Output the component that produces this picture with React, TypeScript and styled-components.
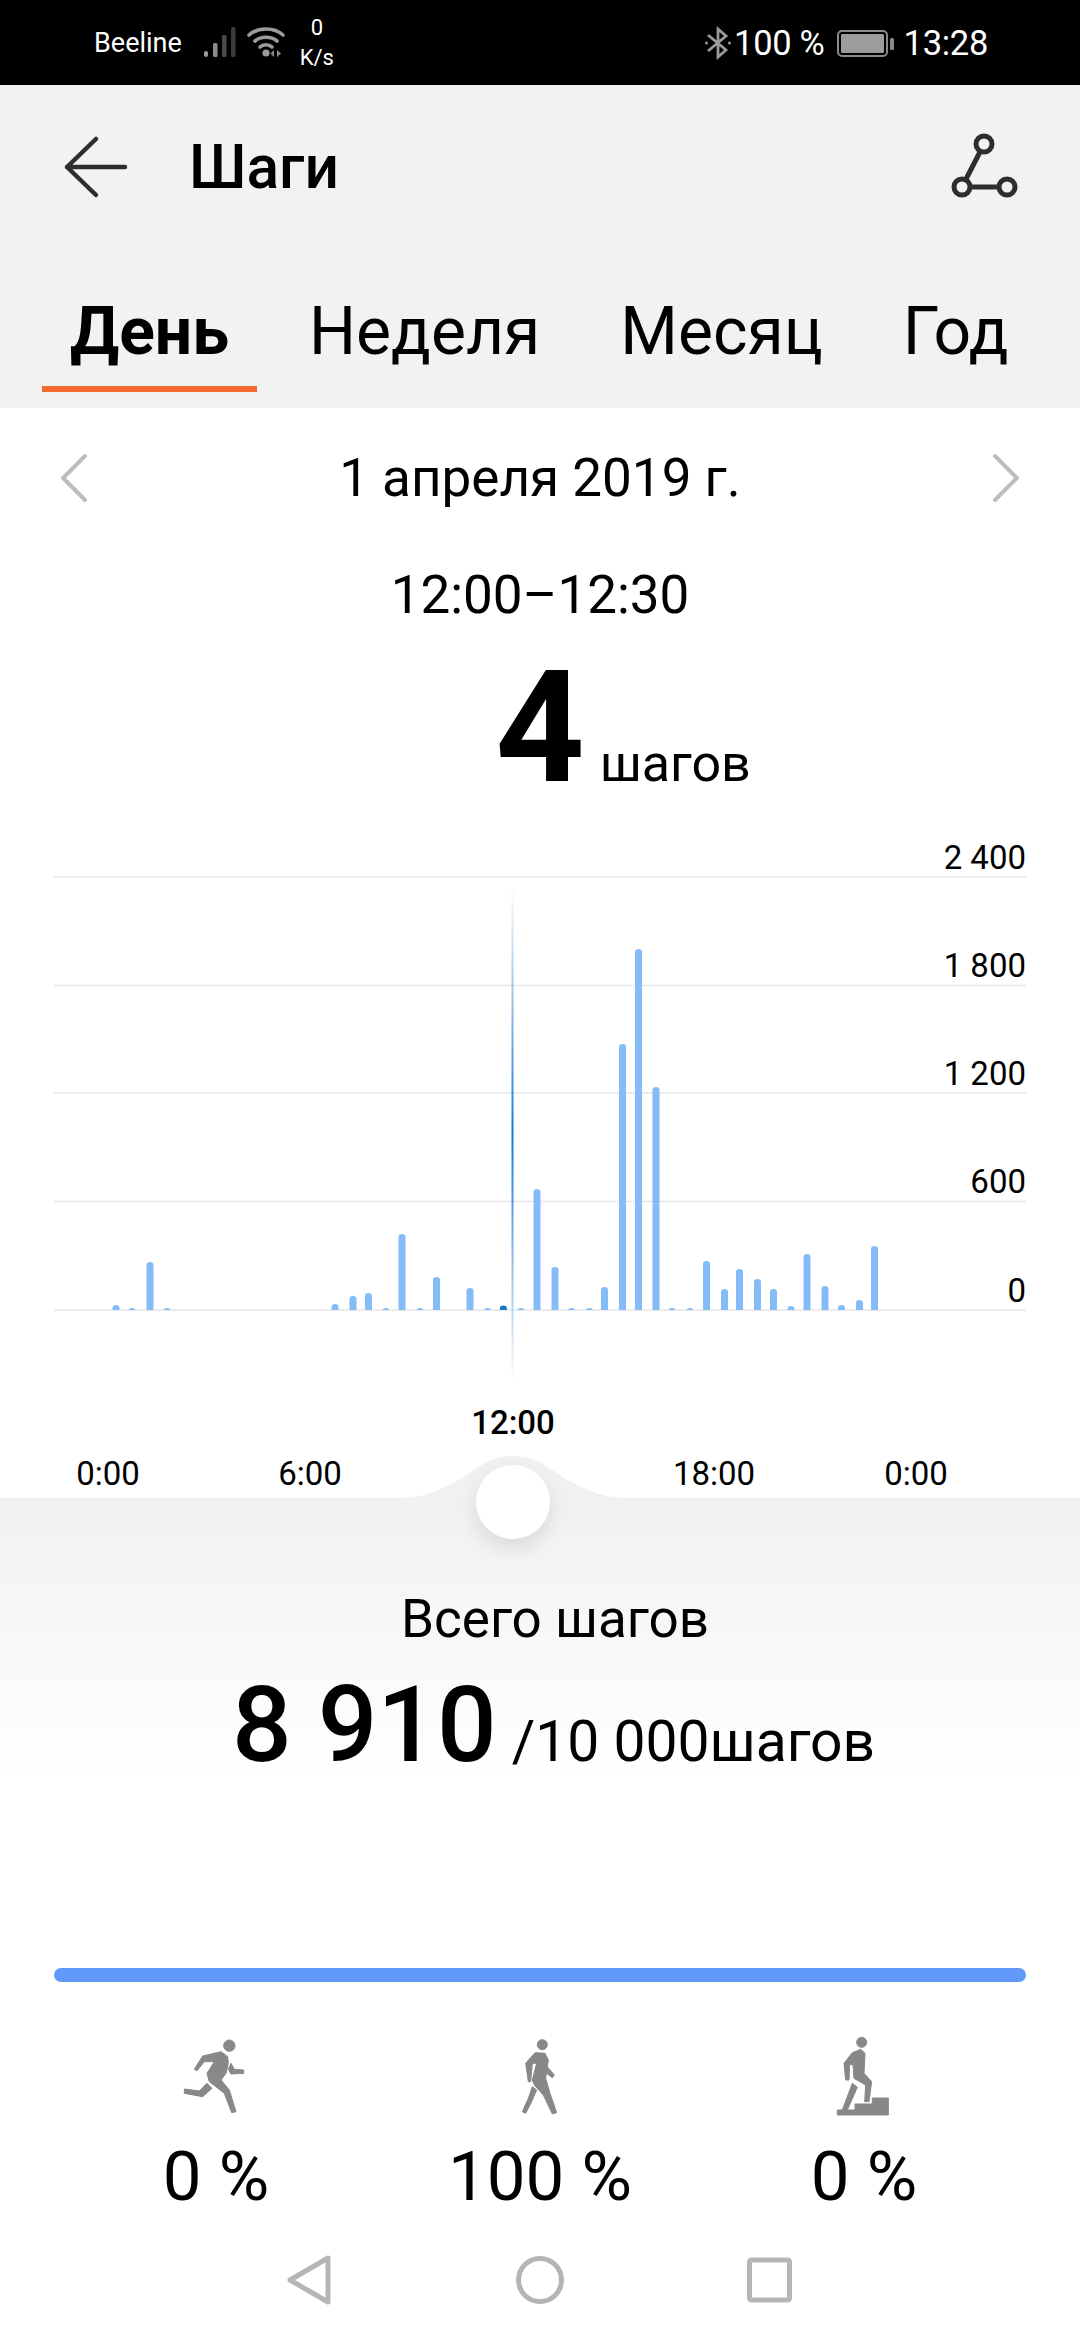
import React from "react";
import styled, { createGlobalStyle } from "styled-components";

const GlobalStyle = createGlobalStyle`
  html, body {
    margin: 0;
    padding: 0;
    background: #ffffff;
  }
  * {
    box-sizing: border-box;
  }
`;

const Page = styled.div`
  width: 1080px;
  height: 2340px;
  overflow: hidden;
  display: flex;
  flex-direction: column;
  background: #ffffff;
  color: #000000;
  font-family: Roboto, "Noto Sans", sans-serif;
`;

const StatusBar = styled.div`
  height: 85px;
  flex: none;
  background: #000000;
  color: #ffffff;
  display: flex;
  align-items: center;
  justify-content: space-between;
  padding: 0 92px 0 94px;
`;

const StatusGroup = styled.div`
  display: flex;
  align-items: center;
`;

const Carrier = styled.span`
  font-size: 27px;
  margin-right: 22px;
`;

const NetSpeed = styled.span`
  width: 48px;
  margin-left: 8px;
  display: flex;
  flex-direction: column;
  align-items: center;
  font-size: 22px;
  line-height: 30px;
`;

const StatusText = styled.span`
  font-size: 34.5px;
  letter-spacing: -0.3px;
`;

const TopPanel = styled.div`
  height: 323px;
  flex: none;
  background: #f2f2f2;
  display: flex;
  flex-direction: column;
`;

const TitleRow = styled.div`
  height: 170px;
  display: flex;
  align-items: center;
  padding: 0 59px 6px 62px;
`;

const Title = styled.h1`
  flex: 1;
  margin: 0 0 0 61px;
  font-size: 60.5px;
  font-weight: 500;
`;

const Tabs = styled.div`
  display: flex;
  gap: 24px;
  padding-left: 42px;
`;

const Tab = styled.div<{ $active?: boolean }>`
  height: 137px;
  padding: 38px 28px 0;
  font-size: 66px;
  line-height: 78px;
  font-weight: ${({ $active }) => ($active ? 700 : 400)};
  border-bottom: 6px solid ${({ $active }) => ($active ? "#f26b2d" : "transparent")};
`;

const DatePager = styled.div`
  height: 140px;
  flex: none;
  display: flex;
  align-items: center;
  justify-content: space-between;
  padding: 0 60px;
  font-size: 53px;
`;

const RangeLabel = styled.div`
  height: 94px;
  flex: none;
  display: flex;
  align-items: center;
  justify-content: center;
  font-size: 53px;
`;

const ValueRow = styled.div`
  height: 178px;
  flex: none;
  display: flex;
  align-items: baseline;
  justify-content: center;
  padding-left: 166px;
  gap: 15px;
`;

const BigValue = styled.span`
  font-size: 156px;
  line-height: 172px;
  font-weight: 700;
`;

const Unit = styled.span`
  font-size: 52px;
`;

const ChartBlock = styled.svg`
  display: block;
  flex: none;
  width: 1080px;
  height: 570px;
`;

const AxisLabel = styled.text`
  font-family: Roboto, sans-serif;
  font-size: 33px;
  fill: #000000;
`;

const TimeAxis = styled.div`
  position: relative;
  height: 108px;
  flex: none;
  display: grid;
  grid-template-columns: repeat(5, 202px);
  padding-left: 7px;
  padding-top: 67px;
  font-size: 33px;
  line-height: 34px;
  text-align: center;
`;

const AxisHump = styled.svg`
  position: absolute;
  left: 380px;
  bottom: 0;
`;

const CurrentTime = styled.span`
  position: absolute;
  left: 0;
  width: 1026px;
  top: 16px;
  font-weight: 500;
`;

const Knob = styled.div`
  position: absolute;
  left: 476px;
  top: 75px;
  width: 74px;
  height: 74px;
  border-radius: 50%;
  background: #ffffff;
  box-shadow: 0 10px 22px rgba(0, 0, 0, 0.1);
  z-index: 2;
`;

const Summary = styled.div`
  height: 470px;
  flex: none;
  padding-top: 91px;
  background: linear-gradient(#f1f1f1, #ffffff 280px);
  display: flex;
  flex-direction: column;
  align-items: center;
`;

const SummaryLabel = styled.div`
  padding-left: 30px;
  font-size: 53px;
  line-height: 60px;
`;

const SummaryValue = styled.div`
  margin-top: 18px;
  padding-left: 27px;
  display: flex;
  align-items: baseline;
  gap: 15px;
`;

const TotalSteps = styled.span`
  font-size: 105px;
  line-height: 118px;
  font-weight: 500;
`;

const Goal = styled.span`
  font-size: 57px;
`;

const ProgressTrack = styled.div`
  height: 14px;
  flex: none;
  margin: 0 54px;
  border-radius: 7px;
  background: #6199f8;
`;

const Modes = styled.div`
  flex: none;
  display: grid;
  grid-template-columns: repeat(3, 324px);
  padding: 48px 54px 0;
`;

const Mode = styled.div`
  display: flex;
  flex-direction: column;
  align-items: center;
`;

const ModeIcon = styled.svg`
  display: block;
  color: #888888;
`;

const ModeValue = styled.div`
  margin-top: 19px;
  font-size: 69px;
  line-height: 76px;
`;

const NavBar = styled.div`
  flex: 1;
  display: flex;
  align-items: flex-start;
  padding: 39px 0 0 286px;
  gap: 182px;
`;

const bars: [number, number][] = [
  [116, 1305], [132, 1308], [150, 1262], [167, 1308], [335, 1304], [353, 1296],
  [368.5, 1293], [386, 1308], [402, 1234], [420, 1308], [436.5, 1277], [470, 1288],
  [487.5, 1308], [521, 1308], [537, 1189], [555, 1267], [571.5, 1308], [589.5, 1308],
  [604.5, 1287], [622.5, 1044], [638.5, 949], [656, 1087], [672, 1308], [690, 1308],
  [706.5, 1261], [724.5, 1289], [739.5, 1269], [757.5, 1279], [773.5, 1289], [791, 1306],
  [807, 1254], [825, 1286], [841.5, 1305], [859.5, 1300], [874.5, 1246],
];

const gridRows = [
  { label: "2 400", y: 37 },
  { label: "1 800", y: 145.5 },
  { label: "1 200", y: 253 },
  { label: "600", y: 361.5 },
  { label: "0", y: 470 },
];

const modes = [
  {
    value: "0 %",
    icon: (
      <>
        <circle cx="175" cy="47" r="17" />
        <path d="M70 118 L95 78 L150 65 L170 80 L172 100 L165 130 L150 150 L175 180 L195 245 L182 248 L160 190 L115 155 L108 130 L130 95 L100 95 L78 122 Z" />
        <path d="M108 160 L123 175 L95 200 L40 190 L40 177 L85 183 Z" />
        <path d="M180 100 L190 118 L218 120 L218 130 L180 132 L172 118 Z" />
      </>
    ),
  },
  {
    value: "100 %",
    icon: (
      <>
        <circle cx="142" cy="44" r="15" />
        <path d="M100 155 L92 100 L120 68 L150 70 L160 90 L152 145 L165 190 L185 248 L172 252 L145 195 L118 165 L112 150 L125 100 L112 100 L107 155 Z" />
        <path d="M112 170 L125 180 L110 215 L92 250 L82 245 L100 205 Z" />
        <path d="M158 112 L178 135 L172 143 L155 130 Z" />
      </>
    ),
  },
  {
    value: "0 %",
    icon: (
      <>
        <circle cx="128" cy="37" r="15" />
        <path d="M80 150 L75 100 L100 68 L125 58 L138 70 L135 130 L158 155 L150 215 L137 215 L140 165 L105 145 L102 105 L92 102 L90 150 Z" />
        <path d="M100 160 L115 172 L85 240 L70 240 Z" />
        <path d="M55 255 V240 H108 V222 H160 V204 H208 V255 Z" />
      </>
    ),
  },
];

const App: React.FC = () => {
  return (
    <Page>
      <GlobalStyle />
      <StatusBar>
        <StatusGroup>
          <Carrier>Beeline</Carrier>
          <svg width="32" height="32" viewBox="0 0 32 32">
            <rect x="0" y="24" width="4" height="6" rx="2" fill="#9a9a9a" />
            <rect x="9" y="16" width="4.5" height="14" rx="1.5" fill="#8c8c8c" />
            <rect x="18" y="8" width="4.5" height="22" rx="1.5" fill="#4a4a4a" />
            <rect x="27" y="0" width="4.5" height="30" rx="1.5" fill="#3a3a3a" />
          </svg>
          <svg width="38" height="34" viewBox="0 0 38 34" style={{ marginLeft: 11 }}>
            <g fill="none" stroke="#9c9c9c" strokeWidth="3.6" strokeLinecap="round">
              <path d="M2 9 C11 1 27 1 36 9" />
              <path d="M8 15 C14 10 24 10 30 15" />
              <path d="M13 21 C16 18 22 18 25 21" />
            </g>
            <circle cx="19" cy="27" r="3.6" fill="#9c9c9c" />
            <path d="M27 24 V31 L23.5 27.5 Z M30 24 V31 L34 27.5 Z" fill="#8a8a8a" />
          </svg>
          <NetSpeed>
            <span>0</span>
            <span>K/s</span>
          </NetSpeed>
        </StatusGroup>
        <StatusGroup>
          <svg width="26" height="34" viewBox="0 0 26 34" style={{ marginRight: 3 }}>
            <path d="M3 9 L21 24 L13 31 V3 L21 10 L3 25" fill="none" stroke="#9a9a9a" strokeWidth="2.8" />
            <circle cx="1.5" cy="17" r="1.5" fill="#9a9a9a" />
            <circle cx="24.5" cy="17" r="1.5" fill="#9a9a9a" />
          </svg>
          <StatusText>100 %</StatusText>
          <svg width="58" height="28" viewBox="0 0 58 28" style={{ margin: "0 9px 0 12px" }}>
            <rect x="1" y="2" width="49" height="25" rx="4" fill="none" stroke="#8a8a8a" strokeWidth="2" />
            <rect x="4" y="5" width="43" height="19" rx="1.5" fill="#9c9c9c" />
            <rect x="53" y="9" width="4" height="12" rx="1.5" fill="#8a8a8a" />
          </svg>
          <StatusText>13:28</StatusText>
        </StatusGroup>
      </StatusBar>

      <TopPanel>
        <TitleRow>
          <svg width="66" height="64" viewBox="0 0 66 64">
            <path d="M34 4 L5 32 L34 60 M5 32 H63" fill="none" stroke="#2e2e2e" strokeWidth="4.5" strokeLinecap="round" strokeLinejoin="round" />
          </svg>
          <Title>Шаги</Title>
          <svg width="70" height="70" viewBox="0 0 70 70">
            <g fill="none" stroke="#2e2e2e" strokeWidth="5">
              <circle cx="33" cy="12" r="8" />
              <circle cx="11" cy="55" r="8" />
              <circle cx="56" cy="55" r="8" />
              <path d="M29.5 19 L14.5 48 M19 55 H48" />
            </g>
          </svg>
        </TitleRow>
        <Tabs>
          <Tab $active>День</Tab>
          <Tab>Неделя</Tab>
          <Tab>Месяц</Tab>
          <Tab>Год</Tab>
        </Tabs>
      </TopPanel>

      <DatePager>
        <svg width="28" height="48" viewBox="0 0 28 48">
          <path d="M25 2 L3 24 L25 46" fill="none" stroke="#bdbdbd" strokeWidth="4" strokeLinecap="round" strokeLinejoin="round" />
        </svg>
        <span>1 апреля 2019 г.</span>
        <svg width="28" height="48" viewBox="0 0 28 48">
          <path d="M3 2 L25 24 L3 46" fill="none" stroke="#bdbdbd" strokeWidth="4" strokeLinecap="round" strokeLinejoin="round" />
        </svg>
      </DatePager>
      <RangeLabel>12:00–12:30</RangeLabel>
      <ValueRow>
        <BigValue>4</BigValue>
        <Unit>шагов</Unit>
      </ValueRow>

      <ChartBlock viewBox="0 -20 1080 570">
        <defs>
          <linearGradient id="cursor" x1="0" y1="0" x2="0" y2="1">
            <stop offset="0" stopColor="#1577d2" stopOpacity="0" />
            <stop offset="0.5" stopColor="#1577d2" stopOpacity="1" />
            <stop offset="1" stopColor="#1577d2" stopOpacity="0" />
          </linearGradient>
        </defs>
        {gridRows.map((row) => (
          <g key={row.label}>
            <line x1="54" x2="1026" y1={row.y} y2={row.y} stroke="#e6e6e6" strokeWidth="1.5" />
            <AxisLabel x="1026" y={row.y - 8.5} textAnchor="end">
              {row.label}
            </AxisLabel>
          </g>
        ))}
        {bars.map(([x, top]) => (
          <path
            key={x}
            d={`M${x - 3.5} 470 V${top - 840 + 3} a3.5 3 0 0 1 7 0 V470 Z`}
            fill="#84bcf7"
          />
        ))}
        <path d="M499.9 470 V468.5 a3.5 3 0 0 1 7 0 V470 Z" fill="#1577d2" />
        <rect x="511.5" y="46" width="2" height="497" fill="url(#cursor)" />
      </ChartBlock>

      <TimeAxis>
        <AxisHump width="266" height="46" viewBox="0 0 266 46">
          <path d="M0 46 H20 C60 46 85 22 105 11 C120 2 146 2 161 11 C181 22 206 46 247 46 H266 Z" fill="#f1f1f1" />
        </AxisHump>
        <CurrentTime>12:00</CurrentTime>
        <span>0:00</span>
        <span>6:00</span>
        <span />
        <span>18:00</span>
        <span>0:00</span>
        <Knob />
      </TimeAxis>

      <Summary>
        <SummaryLabel>Всего шагов</SummaryLabel>
        <SummaryValue>
          <TotalSteps>8 910</TotalSteps>
          <Goal>/10 000шагов</Goal>
        </SummaryValue>
      </Summary>

      <ProgressTrack />

      <Modes>
        {modes.map((mode, index) => (
          <Mode key={index}>
            <ModeIcon
              width="90"
              height="90"
              viewBox="0 0 270 270"
              fill="currentColor"
              stroke="currentColor"
              strokeWidth="3"
              strokeLinejoin="round"
            >
              {mode.icon}
            </ModeIcon>
            <ModeValue>{mode.value}</ModeValue>
          </Mode>
        ))}
      </Modes>

      <NavBar>
        <svg width="48" height="52" viewBox="0 0 48 52">
          <path d="M42 4 L4 26 L42 48 Z" fill="none" stroke="#b5b5b5" strokeWidth="5" strokeLinejoin="round" />
        </svg>
        <svg width="48" height="52" viewBox="0 0 48 52">
          <circle cx="24" cy="26" r="21.5" fill="none" stroke="#b5b5b5" strokeWidth="5" />
        </svg>
        <svg width="48" height="52" viewBox="0 0 48 52">
          <rect x="3.5" y="6" width="40" height="40" rx="2" fill="none" stroke="#b5b5b5" strokeWidth="5" />
        </svg>
      </NavBar>
    </Page>
  );
};

export default App;
